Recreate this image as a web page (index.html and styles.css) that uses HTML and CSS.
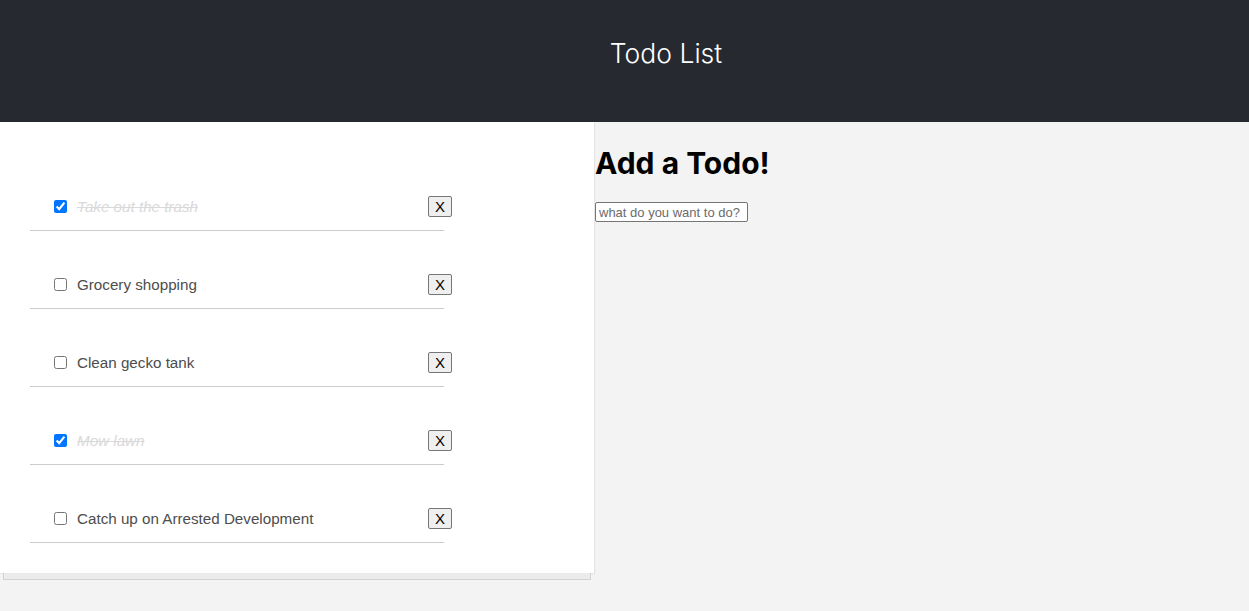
FILE: index.html
```html
<!DOCTYPE html>
<html lang="en">
<head>
<meta charset="utf-8">
<title>Todo List</title>
<link rel="stylesheet" href="styles.css">
</head>
<body>
<header class="app-header">
  <h2 class="app-title">Todo List</h2>
</header>
<main class="app-main">
  <div class="todo-column">
    <section class="todo-panel">
      <ul class="todo-list">
        <li class="todo-item done">
          <input type="checkbox" class="todo-check" checked>
          <span class="todo-text">Take out the trash</span>
          <button class="todo-delete">X</button>
        </li>
        <li class="todo-item">
          <input type="checkbox" class="todo-check">
          <span class="todo-text">Grocery shopping</span>
          <button class="todo-delete">X</button>
        </li>
        <li class="todo-item">
          <input type="checkbox" class="todo-check">
          <span class="todo-text">Clean gecko tank</span>
          <button class="todo-delete">X</button>
        </li>
        <li class="todo-item done">
          <input type="checkbox" class="todo-check" checked>
          <span class="todo-text">Mow lawn</span>
          <button class="todo-delete">X</button>
        </li>
        <li class="todo-item">
          <input type="checkbox" class="todo-check">
          <span class="todo-text">Catch up on Arrested Development</span>
          <button class="todo-delete">X</button>
        </li>
      </ul>
    </section>
    <div class="panel-stack"></div>
  </div>
  <section class="add-panel">
    <h1 class="add-title">Add a Todo!</h1>
    <input type="text" class="add-input" placeholder="what do you want to do?">
  </section>
</main>
</body>
</html>
```
FILE: styles.css
```css
html, body {
  margin: 0;
  padding: 0;
}
body {
  background: #f3f3f3;
  font-family: "Liberation Sans", Arial, sans-serif;
}
.app-header {
  height: 122px;
  background: #262930;
  display: flex;
  align-items: center;
  justify-content: center;
  padding: 0 0 16px 83px;
  box-sizing: border-box;
}
.app-title {
  margin: 0;
  color: #ffffff;
  font-family: Inter, "Liberation Sans", sans-serif;
  font-weight: 300;
  font-size: 26.5px;
}
.app-main {
  display: flex;
  align-items: flex-start;
}
.todo-column {
  width: 594px;
  display: flex;
  flex-direction: column;
}
.todo-panel {
  background: #ffffff;
  box-shadow: 1px 1px 1px rgba(0, 0, 0, 0.06);
}
.panel-stack {
  margin: 0 3px;
  height: 6px;
  background: #ebebeb;
  border: 1px solid #d2d2d2;
  border-top: none;
}
.todo-list {
  list-style: none;
  margin: 0;
  padding: 31px 0 30px 30px;
  width: 414px;
}
.todo-item {
  display: flex;
  align-items: center;
  height: 21px;
  padding: 43px 0 13px 24px;
  border-bottom: 1px solid #cbcbcb;
}
.todo-check {
  margin: 0 10px 0 0;
  width: 13px;
  height: 13px;
}
.todo-text {
  font-size: 15.2px;
  color: #4d4d4d;
}
.done .todo-text {
  color: #d9d9d9;
  font-style: italic;
  text-decoration: line-through;
}
.todo-delete {
  margin: 0 -8px 0 auto;
  height: 21px;
  padding: 0 6px;
  font-family: "Liberation Sans", Arial, sans-serif;
  font-size: 15px;
  color: #000;
  background: #efefef;
  border: 1px solid #767676;
  border-radius: 2px;
}
.add-panel {
  flex: 1;
  padding-left: 1px;
}
.add-title {
  margin: 23px 0 21px;
  font-family: Inter, "Liberation Sans", sans-serif;
  font-weight: 700;
  font-size: 30px;
  color: #000;
}
.add-input {
  display: block;
  box-sizing: border-box;
  width: 153px;
  height: 20px;
  margin: 0;
  padding: 1px 3px;
  font-family: "Liberation Sans", Arial, sans-serif;
  font-size: 13px;
  border: 1px solid #767676;
  border-radius: 2px;
  background: #fff;
}
.add-input::placeholder {
  color: #6b6b6b;
}
```
